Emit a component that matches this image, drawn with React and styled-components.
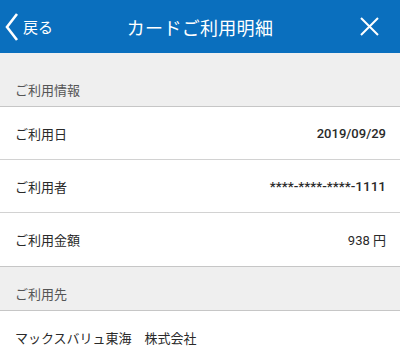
import styled, { createGlobalStyle } from "styled-components";

const GlobalStyle = createGlobalStyle`
	body {
		margin: 0;
		background: #ffffff;
		font-family: Roboto, "Noto Sans CJK JP", sans-serif;
		color: #333333;
	}
`;

const Screen = styled.div`
	width: 400px;
	height: 361px;
	overflow: hidden;
	background: #ffffff;
`;

const TopBar = styled.header`
	height: 53px;
	background: #0a6fbe;
	color: #ffffff;
	display: grid;
	grid-template-columns: 90px 1fr 90px;
	align-items: center;
`;

const BackButton = styled.div`
	display: flex;
	align-items: center;
	gap: 3px;
	padding-left: 4px;
	font-size: 15px;
	font-family: "Noto Sans CJK JP", sans-serif;
`;

const Title = styled.h1`
	margin: 0;
	text-align: center;
	font-size: 18px;
	font-weight: 400;
	font-family: "Noto Sans CJK JP", sans-serif;
	letter-spacing: 0.3px;
`;

const CloseButton = styled.div`
	display: flex;
	justify-content: flex-end;
	padding-right: 21px;
`;

const SectionHeader = styled.div`
	background: #efefef;
	border-top: ${(p) => (p.$first ? "none" : "1px solid #c6c6c6")};
	border-bottom: 1px solid #c6c6c6;
	padding: ${(p) => (p.$first ? "30px" : "20px")} 15px 9px;
	font-size: 13px;
	line-height: 14px;
	color: #555555;
	font-family: "Noto Sans CJK JP", sans-serif;
`;

const Row = styled.div`
	height: 53px;
	box-sizing: border-box;
	display: flex;
	align-items: center;
	justify-content: space-between;
	padding: 0 14px 0 15px;
	border-bottom: ${(p) => (p.$last ? "none" : "1px solid #d2d2d2")};
	font-size: 13px;
`;

const Label = styled.span`
	font-family: "Noto Sans CJK JP", sans-serif;
	color: #2a2a2a;
`;

const Value = styled.span`
	font-family: Roboto, "Noto Sans CJK JP", sans-serif;
	font-size: ${(p) => (p.$small ? "13.5px" : "13px")};
	font-weight: ${(p) => (p.$bold ? 500 : 400)};
	color: #2a2a2a;
`;

const App = () => {
	return (
		<>
			<GlobalStyle />
			<Screen>
				<TopBar>
					<BackButton>
						<svg width="16" height="30" viewBox="0 0 16 30">
							<polyline
								points="13,2 3,15 13,28"
								fill="none"
								stroke="#ffffff"
								strokeWidth="2.6"
							/>
						</svg>
						<span>戻る</span>
					</BackButton>
					<Title>カードご利用明細</Title>
					<CloseButton>
						<svg width="19" height="19" viewBox="0 0 19 19">
							<path
								d="M1 1 L18 18 M18 1 L1 18"
								stroke="#ffffff"
								strokeWidth="2"
								fill="none"
							/>
						</svg>
					</CloseButton>
				</TopBar>

				<SectionHeader $first>ご利用情報</SectionHeader>
				<Row>
					<Label>ご利用日</Label>
					<Value $bold>2019/09/29</Value>
				</Row>
				<Row>
					<Label>ご利用者</Label>
					<Value $bold $small>****-****-****-1111</Value>
				</Row>
				<Row $last>
					<Label>ご利用金額</Label>
					<Value>938 円</Value>
				</Row>

				<SectionHeader>ご利用先</SectionHeader>
				<Row $last>
					<Label>マックスバリュ東海　株式会社</Label>
				</Row>
			</Screen>
		</>
	);
};

export default App;
